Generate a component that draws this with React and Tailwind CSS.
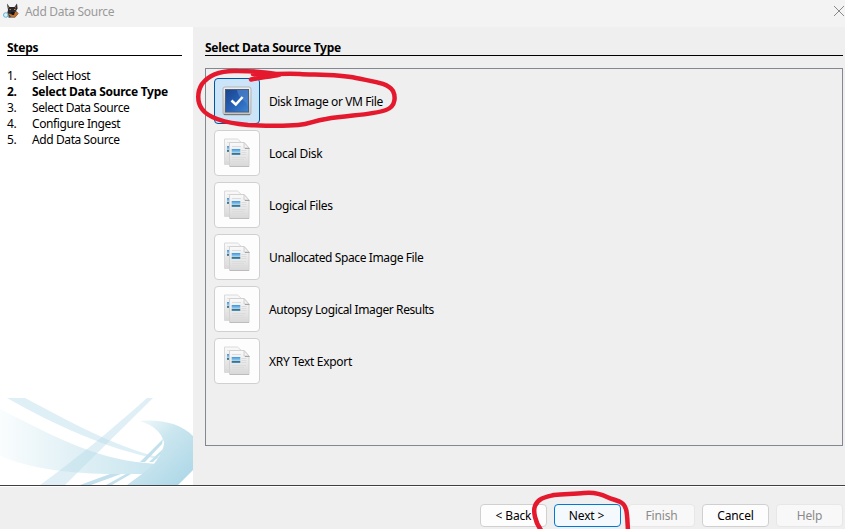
import React from "react";

const steps = [
  "Select Host",
  "Select Data Source Type",
  "Select Data Source",
  "Configure Ingest",
  "Add Data Source",
];

const sources = [
  ["Disk Image or VM File", "tracking-[-0.4px]"],
  ["Local Disk", "tracking-[-0.3px]"],
  ["Logical Files", "tracking-[-0.3px]"],
  ["Unallocated Space Image File", "tracking-[-0.39px]"],
  ["Autopsy Logical Imager Results", "tracking-[-0.39px]"],
  ["XRY Text Export", "tracking-[-0.3px]"],
];

function DogIcon() {
  return (
    <svg width="17" height="17" viewBox="0 0 17 17" className="shrink-0">
      <path d="M4 1.500 6.500 5h5L14 1.500l.6 5L13 9l2.500 2.500L12 15.500H7L4 12l1-4z" fill="#29292d" />
      <path d="M4.700 3 6 5.500 5 7zM13.200 3 12 5.500 13 7z" fill="#8b6a63" />
      <path d="M5 11.500l4 1 3-3 3.500 1.500-3 4H8z" fill="#c4702a" />
      <path d="M8 10h4l-1 3H9z" fill="#151517" />
      <path d="M6.500 7.500h1.500M11 7.500h1.500" stroke="#d18a45" />
      <circle cx="2.800" cy="13" r="2.300" fill="#d6f1f8" stroke="#6bb2ca" />
      <path d="m4.800 14.500 2 1.200" stroke="#3b6478" />
    </svg>
  );
}

function DocsIcon() {
  return (
    <svg width="28" height="30" viewBox="0 0 28 30">
      <defs>
        <linearGradient id="paper" x1="0" y1="0" x2="0" y2="1">
          <stop offset="0" stopColor="#fafafa" />
          <stop offset="1" stopColor="#d8d8d8" />
        </linearGradient>
        <linearGradient id="photo" x1="0" y1="0" x2="0" y2="1">
          <stop offset="0" stopColor="#3c93d8" />
          <stop offset=".5" stopColor="#8fc8ee" />
          <stop offset=".62" stopColor="#a8d6ee" />
          <stop offset=".75" stopColor="#47717f" />
          <stop offset="1" stopColor="#4697cf" />
        </linearGradient>
      </defs>
      <path d="M1.500 1h13l5 4.500v21h-18z" fill="url(#paper)" stroke="#dadada" />
      <path d="M4 4.500h7M4 18.500h3M4 20.500h3M4 22.500h3" stroke="#e2e2e2" />
      <path d="M4 8h2.500v6H4z" fill="url(#photo)" />
      <path d="M6.500 4.500h14.500l5 5.500v18.500H6.500z" fill="url(#paper)" stroke="#d2d2d2" />
      <path d="M21 4.500v5.500h5z" fill="#f2f2f2" stroke="#c6c6c6" strokeWidth=".8" />
      <path d="M22 10.500h4.500" stroke="#a4a4a4" />
      <path d="M9 8.500h9M18.500 12.500h5M18.500 14.500h5M18.500 16.500h5M9 19.500h14M9 21.500h12M9 23.500h14" stroke="#dcdcdc" />
      <path d="M8.700 11h8.600v6H8.700z" fill="url(#photo)" />
      <path d="M7 28.500h19" stroke="#bcbcbc" />
    </svg>
  );
}

function CheckIcon() {
  return (
    <svg width="30" height="30" viewBox="0 0 30 30">
      <defs>
        <linearGradient id="blue" x1="0" y1="0" x2="1" y2="1">
          <stop offset="0" stopColor="#1b438b" />
          <stop offset=".5" stopColor="#255eb4" />
          <stop offset="1" stopColor="#3f86d3" />
        </linearGradient>
        <linearGradient id="frame" x1="0" y1="0" x2="0" y2="1">
          <stop offset="0" stopColor="#f0f0ef" />
          <stop offset="1" stopColor="#c4c4c2" />
        </linearGradient>
      </defs>
      <rect x="1" y="1" width="28" height="28" rx="2" fill="url(#frame)" stroke="#b3b5b7" />
      <path d="M2 28.500h26" stroke="#77797c" />
      <rect x="3.500" y="3.500" width="23" height="22.500" fill="url(#blue)" stroke="#4a5f80" />
      <path d="M15 4h11v17C25 14 17 15 15 4z" fill="#5a8ed1" opacity=".55" />
      <path d="m9.500 14.500 4.300 4 6.800-7.500" fill="none" stroke="white" strokeWidth="2.600" />
    </svg>
  );
}

function Swoosh() {
  return (
    <svg width="193" height="87" viewBox="0 0 193 87" className="block">
      <defs>
        <linearGradient id="wave" x1="0" y1="0" x2="1" y2="0">
          <stop offset="0" stopColor="#fafdfe" />
          <stop offset=".45" stopColor="#e2f1f6" />
          <stop offset="1" stopColor="#c8e5ef" />
        </linearGradient>
        <linearGradient id="curl" gradientUnits="userSpaceOnUse" x1="142" y1="23" x2="190" y2="75">
          <stop offset="0" stopColor="#eef7fa" />
          <stop offset=".4" stopColor="#cbe6ef" />
          <stop offset="1" stopColor="#b0d9e8" />
        </linearGradient>
      </defs>
      <path d="M7 0h18C65 21 112 48 160 59.500l-3 1.500C105 50 55 27 7 0z" fill="#dfeff6" />
      <path d="M0 11C38 30 85 57 136 64l20 2-10 10H115C75 76 30 71 0 58z" fill="url(#wave)" />
      <path d="M147 0h6L65 87H40C76 61 110 33 147 0z" fill="#b8dce8" opacity=".45" />
      <path d="M140 23c22-2 41 3 53 15v34L178 87h-51l15-11 12-10c6-8 10-15 10-22-3-10-11-17-24-21z" fill="url(#curl)" />
      <path d="m140 64 23-23-1 5-17 18zm9 0 14-13-2 5-8 8zM80 87l30-11h11L91 87zm26 0 20-11h5l-19 11z" fill="#c2e1ec" />
    </svg>
  );
}

const base = "flex h-[23px] w-[67px] items-center justify-center rounded-[4px] border tracking-[-0.15px]";

export default function App() {
  return (
    <div className="relative flex h-[529px] w-[845px] flex-col overflow-hidden bg-[#efefef] font-['Noto_Sans','Open_Sans',sans-serif] text-[12px] leading-4 text-black">
      <header className="flex h-[27px] shrink-0 items-start justify-between bg-[#f3f3f3] pl-[3px] pt-[2px]">
        <div className="flex items-start">
          <DogIcon />
          <h1 className="ml-[5px] mt-[2px] whitespace-nowrap tracking-[-0.3px] text-[#999]">Add Data Source</h1>
        </div>
        <svg width="12" height="12" viewBox="0 0 12 12" className="mt-[3px]">
          <path d="m1 1 10 10M11 1 1 11" stroke="#888" strokeWidth="1" />
        </svg>
      </header>
      <main className="flex h-[458px] shrink-0">
        <aside className="flex w-[193px] shrink-0 flex-col justify-between bg-white">
          <div className="pl-[7px] pr-[11px] pt-[13px]">
            <h2 className="h-4 border-b border-black font-bold leading-[15px] tracking-[-0.25px]">Steps</h2>
            <ol className="mt-[12px]">
              {steps.map((s, i) => (
                <li key={s} className={`flex h-4 whitespace-nowrap ${i === 1 ? "font-bold tracking-[-0.28px]" : "tracking-[-0.4px]"}`}>
                  <span className="w-[25px]">{i + 1}.</span>
                  <span>{s}</span>
                </li>
              ))}
            </ol>
          </div>
          <Swoosh />
        </aside>
        <section className="flex flex-1 flex-col pl-3 pr-[2px] pt-[13px]">
          <h2 className="h-4 border-b border-black font-bold leading-[15px] tracking-[-0.28px]">Select Data Source Type</h2>
          <div className="mt-3 flex h-[378px] flex-col gap-[6px] border border-[#828790] pl-2 pt-[9px]">
            {sources.map(([s, tracking], i) => (
              <div key={s} className="flex items-center">
                <button className={`flex h-[46px] w-[46px] items-center justify-center rounded-[4px] border ${i === 0 ? "border-[#0054a0] bg-[#cce4f7]" : "border-[#d0d0d0] bg-[#fdfdfd]"}`}>
                  {i === 0 ? <CheckIcon /> : <DocsIcon />}
                </button>
                <span className={`ml-[9px] mt-[2px] whitespace-nowrap ${tracking}`}>{s}</span>
              </div>
            ))}
          </div>
        </section>
      </main>
      <footer className="flex flex-1 justify-end gap-[7px] border-t border-[#404040] pr-[2px] pt-[18px] shadow-[inset_0_1px_0_white]">
        <button className={`${base} border-[#d0d0d0] bg-[#fdfdfd]`}>&lt; Back</button>
        <button className={`${base} border-[#0078d4] bg-[#f4f9fd] pr-[2px]`}>Next &gt;</button>
        <button className={`${base} border-[#e7e7e7] bg-[#f8f8f8] text-[#8b8b8b]`}>Finish</button>
        <button className={`${base} border-[#d0d0d0] bg-[#fdfdfd]`}>Cancel</button>
        <button className={`${base} border-[#e7e7e7] bg-[#f8f8f8] text-[#8b8b8b]`}>Help</button>
      </footer>
      <svg width="845" height="529" viewBox="0 0 845 529" className="pointer-events-none absolute left-0 top-0" fill="none" stroke="#e5192d" strokeWidth="4.5" strokeLinecap="round" strokeLinejoin="round">
        <path d="M251 79.500C262 77 270 77 280 74.500C266 72 250 71 238 71C219 70 208 76 202 84C197 92 197 102 202 109C209 119 226 123 248 125C268 126 287 126 298 125C311 124 312 121 326 119C350 115 372 115 386 110C397 106 395 95 393 91C388 83 375 82 356 78C338 74 312 75 300 74C285 73 266 75 253 74" />
        <path d="M541 530C535 522 533 511 535 506C538 498 546 497 554 495C566 494 575 494 584 493C593 492 599 493 607 497C613 500 618 500 622 503C628 507 627 519 628 530" />
      </svg>
    </div>
  );
}
